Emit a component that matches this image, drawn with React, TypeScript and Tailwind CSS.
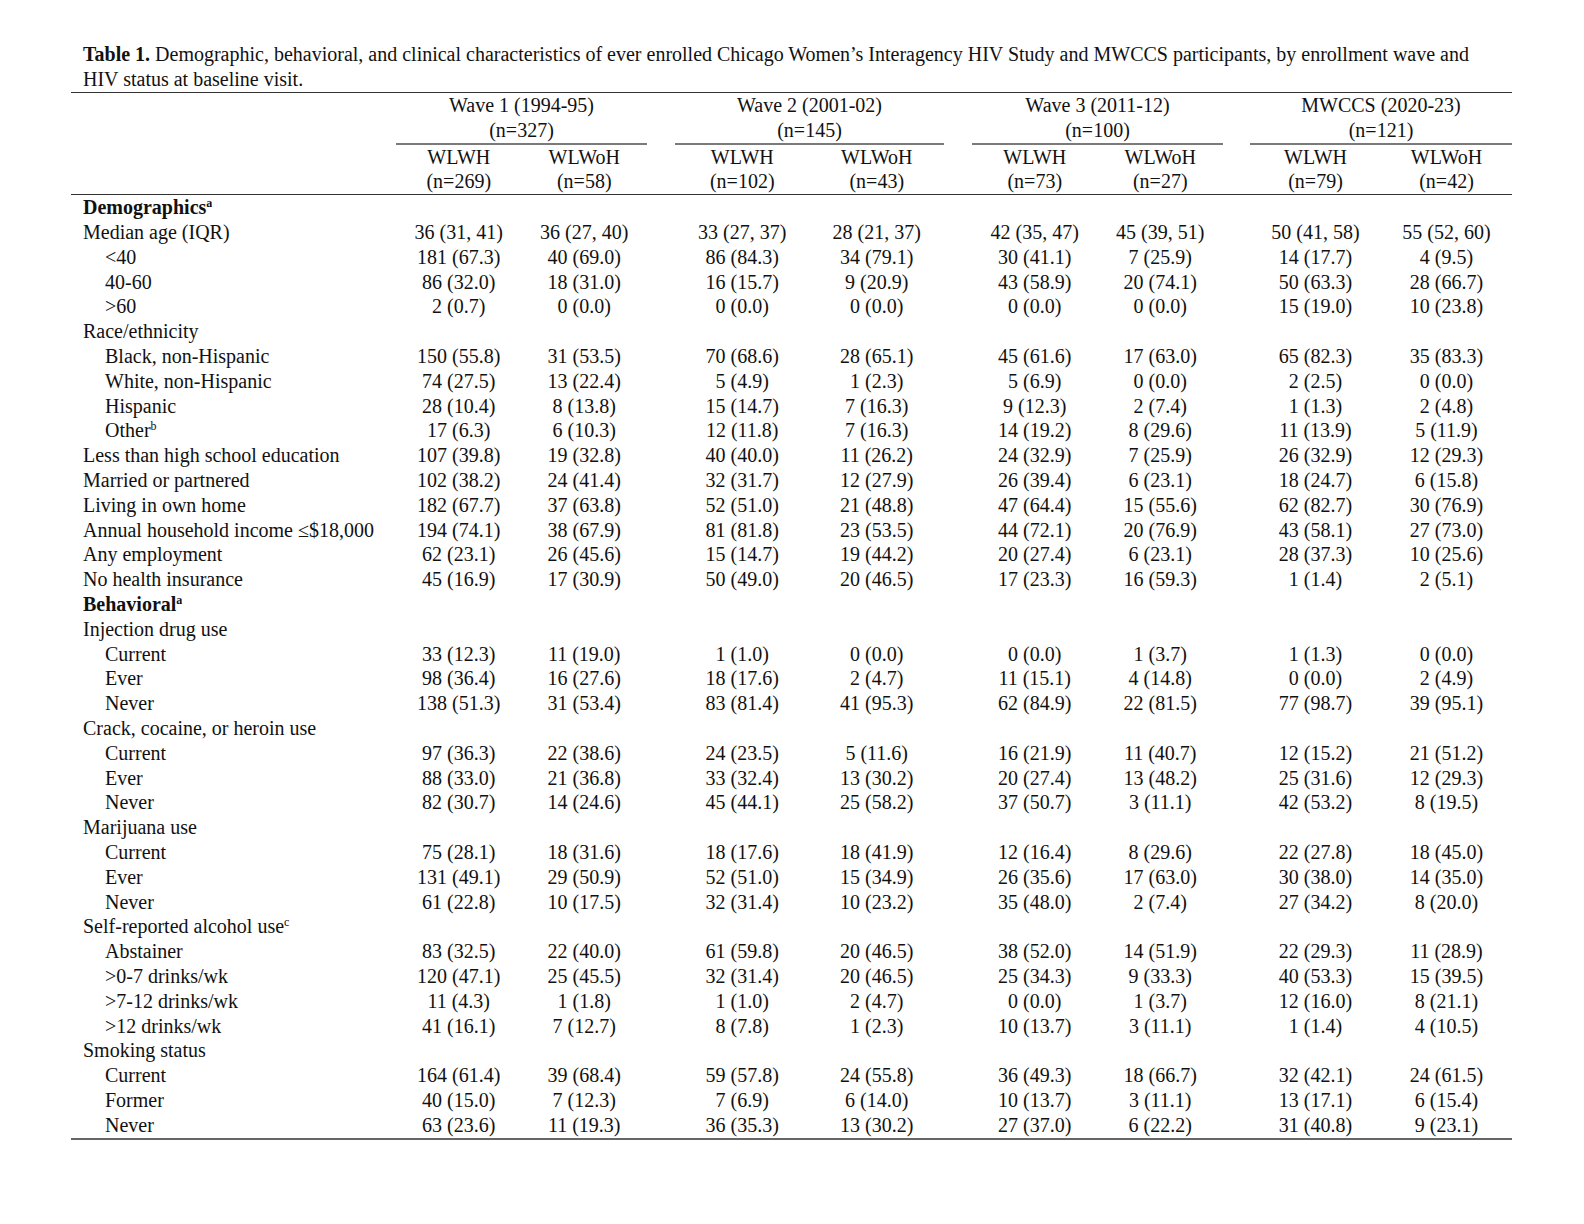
type Row = {
  label: string;
  sup?: string;
  bold?: boolean;
  indent?: boolean;
  vals?: string[];
};

const cols = "grid grid-cols-[325px_125.5px_125.5px_28px_134.5px_134.5px_28px_125.5px_125.5px_27px_131px_131px]";

const valCols = [
  "col-start-2",
  "col-start-3",
  "col-start-5",
  "col-start-6",
  "col-start-8",
  "col-start-9",
  "col-start-11",
  "col-start-12",
];

const groupCols = [
  "col-start-2 col-span-2",
  "col-start-5 col-span-2",
  "col-start-8 col-span-2",
  "col-start-11 col-span-2",
];

const groups = [
  { name: "Wave 1 (1994-95)", n: "(n=327)", sub: ["(n=269)", "(n=58)"] },
  { name: "Wave 2 (2001-02)", n: "(n=145)", sub: ["(n=102)", "(n=43)"] },
  { name: "Wave 3 (2011-12)", n: "(n=100)", sub: ["(n=73)", "(n=27)"] },
  { name: "MWCCS (2020-23)", n: "(n=121)", sub: ["(n=79)", "(n=42)"] },
];

const v = (s: string) => s.split("|").map((x) => x.trim());

const rows: Row[] = [
  { label: "Demographics", sup: "a", bold: true },
  { label: "Median age (IQR)", vals: v("36 (31, 41)|36 (27, 40)|33 (27, 37)|28 (21, 37)|42 (35, 47)|45 (39, 51)|50 (41, 58)|55 (52, 60)") },
  { label: "<40", indent: true, vals: v("181 (67.3)|40 (69.0)|86 (84.3)|34 (79.1)|30 (41.1)|7 (25.9)|14 (17.7)|4 (9.5)") },
  { label: "40-60", indent: true, vals: v("86 (32.0)|18 (31.0)|16 (15.7)|9 (20.9)|43 (58.9)|20 (74.1)|50 (63.3)|28 (66.7)") },
  { label: ">60", indent: true, vals: v("2 (0.7)|0 (0.0)|0 (0.0)|0 (0.0)|0 (0.0)|0 (0.0)|15 (19.0)|10 (23.8)") },
  { label: "Race/ethnicity" },
  { label: "Black, non-Hispanic", indent: true, vals: v("150 (55.8)|31 (53.5)|70 (68.6)|28 (65.1)|45 (61.6)|17 (63.0)|65 (82.3)|35 (83.3)") },
  { label: "White, non-Hispanic", indent: true, vals: v("74 (27.5)|13 (22.4)|5 (4.9)|1 (2.3)|5 (6.9)|0 (0.0)|2 (2.5)|0 (0.0)") },
  { label: "Hispanic", indent: true, vals: v("28 (10.4)|8 (13.8)|15 (14.7)|7 (16.3)|9 (12.3)|2 (7.4)|1 (1.3)|2 (4.8)") },
  { label: "Other", sup: "b", indent: true, vals: v("17 (6.3)|6 (10.3)|12 (11.8)|7 (16.3)|14 (19.2)|8 (29.6)|11 (13.9)|5 (11.9)") },
  { label: "Less than high school education", vals: v("107 (39.8)|19 (32.8)|40 (40.0)|11 (26.2)|24 (32.9)|7 (25.9)|26 (32.9)|12 (29.3)") },
  { label: "Married or partnered", vals: v("102 (38.2)|24 (41.4)|32 (31.7)|12 (27.9)|26 (39.4)|6 (23.1)|18 (24.7)|6 (15.8)") },
  { label: "Living in own home", vals: v("182 (67.7)|37 (63.8)|52 (51.0)|21 (48.8)|47 (64.4)|15 (55.6)|62 (82.7)|30 (76.9)") },
  { label: "Annual household income ≤$18,000", vals: v("194 (74.1)|38 (67.9)|81 (81.8)|23 (53.5)|44 (72.1)|20 (76.9)|43 (58.1)|27 (73.0)") },
  { label: "Any employment", vals: v("62 (23.1)|26 (45.6)|15 (14.7)|19 (44.2)|20 (27.4)|6 (23.1)|28 (37.3)|10 (25.6)") },
  { label: "No health insurance", vals: v("45 (16.9)|17 (30.9)|50 (49.0)|20 (46.5)|17 (23.3)|16 (59.3)|1 (1.4)|2 (5.1)") },
  { label: "Behavioral", sup: "a", bold: true },
  { label: "Injection drug use" },
  { label: "Current", indent: true, vals: v("33 (12.3)|11 (19.0)|1 (1.0)|0 (0.0)|0 (0.0)|1 (3.7)|1 (1.3)|0 (0.0)") },
  { label: "Ever", indent: true, vals: v("98 (36.4)|16 (27.6)|18 (17.6)|2 (4.7)|11 (15.1)|4 (14.8)|0 (0.0)|2 (4.9)") },
  { label: "Never", indent: true, vals: v("138 (51.3)|31 (53.4)|83 (81.4)|41 (95.3)|62 (84.9)|22 (81.5)|77 (98.7)|39 (95.1)") },
  { label: "Crack, cocaine, or heroin use" },
  { label: "Current", indent: true, vals: v("97 (36.3)|22 (38.6)|24 (23.5)|5 (11.6)|16 (21.9)|11 (40.7)|12 (15.2)|21 (51.2)") },
  { label: "Ever", indent: true, vals: v("88 (33.0)|21 (36.8)|33 (32.4)|13 (30.2)|20 (27.4)|13 (48.2)|25 (31.6)|12 (29.3)") },
  { label: "Never", indent: true, vals: v("82 (30.7)|14 (24.6)|45 (44.1)|25 (58.2)|37 (50.7)|3 (11.1)|42 (53.2)|8 (19.5)") },
  { label: "Marijuana use" },
  { label: "Current", indent: true, vals: v("75 (28.1)|18 (31.6)|18 (17.6)|18 (41.9)|12 (16.4)|8 (29.6)|22 (27.8)|18 (45.0)") },
  { label: "Ever", indent: true, vals: v("131 (49.1)|29 (50.9)|52 (51.0)|15 (34.9)|26 (35.6)|17 (63.0)|30 (38.0)|14 (35.0)") },
  { label: "Never", indent: true, vals: v("61 (22.8)|10 (17.5)|32 (31.4)|10 (23.2)|35 (48.0)|2 (7.4)|27 (34.2)|8 (20.0)") },
  { label: "Self-reported alcohol use", sup: "c" },
  { label: "Abstainer", indent: true, vals: v("83 (32.5)|22 (40.0)|61 (59.8)|20 (46.5)|38 (52.0)|14 (51.9)|22 (29.3)|11 (28.9)") },
  { label: ">0-7 drinks/wk", indent: true, vals: v("120 (47.1)|25 (45.5)|32 (31.4)|20 (46.5)|25 (34.3)|9 (33.3)|40 (53.3)|15 (39.5)") },
  { label: ">7-12 drinks/wk", indent: true, vals: v("11 (4.3)|1 (1.8)|1 (1.0)|2 (4.7)|0 (0.0)|1 (3.7)|12 (16.0)|8 (21.1)") },
  { label: ">12 drinks/wk", indent: true, vals: v("41 (16.1)|7 (12.7)|8 (7.8)|1 (2.3)|10 (13.7)|3 (11.1)|1 (1.4)|4 (10.5)") },
  { label: "Smoking status" },
  { label: "Current", indent: true, vals: v("164 (61.4)|39 (68.4)|59 (57.8)|24 (55.8)|36 (49.3)|18 (66.7)|32 (42.1)|24 (61.5)") },
  { label: "Former", indent: true, vals: v("40 (15.0)|7 (12.3)|7 (6.9)|6 (14.0)|10 (13.7)|3 (11.1)|13 (17.1)|6 (15.4)") },
  { label: "Never", indent: true, vals: v("63 (23.6)|11 (19.3)|36 (35.3)|13 (30.2)|27 (37.0)|6 (22.2)|31 (40.8)|9 (23.1)") },
];

function Sup({ children }: { children: string }) {
  return (
    <span className="relative -top-[7px] text-[12px] leading-none">{children}</span>
  );
}

export default function App() {
  return (
    <div className="min-h-screen bg-white text-[#111] font-['Liberation_Serif',serif] text-[20px] leading-[24.8px]">
      <div className="ml-[71px] w-[1441px] pt-[42px] pb-[86px]">
        <p className="pl-[12px]">
          <span className="font-bold">Table 1.</span> Demographic, behavioral, and clinical characteristics of ever
          enrolled Chicago Women’s Interagency HIV Study and MWCCS participants, by enrollment wave and
          <br />
          HIV status at baseline visit.
        </p>

        <div className="h-[1.5px] bg-[#333]" />

        <div className={cols}>
          {groups.map((g, i) => (
            <div key={g.name} className={`${groupCols[i]} text-center`}>
              <div>{g.name}</div>
              <div>{g.n}</div>
              <div className="h-[2px] bg-[#7a7a7a]" />
            </div>
          ))}
        </div>

        <div className={cols}>
          {groups.map((g, gi) =>
            g.sub.map((s, si) => (
              <div key={s + gi} className={`${valCols[gi * 2 + si]} text-center`}>
                <div>{si === 0 ? "WLWH" : "WLWoH"}</div>
                <div>{s}</div>
              </div>
            ))
          )}
        </div>

        <div className="h-px bg-[#333]" />

        {rows.map((r, i) => (
          <div key={i} className={cols}>
            <div className={`${r.indent ? "pl-[34px]" : "pl-[12px]"} ${r.bold ? "font-bold" : ""} whitespace-nowrap`}>
              {r.label}
              {r.sup && <Sup>{r.sup}</Sup>}
            </div>
            {r.vals?.map((x, j) => (
              <div key={j} className={`${valCols[j]} text-center whitespace-nowrap`}>
                {x}
              </div>
            ))}
          </div>
        ))}

        <div className="h-[2px] bg-[#666]" />
      </div>
    </div>
  );
}
